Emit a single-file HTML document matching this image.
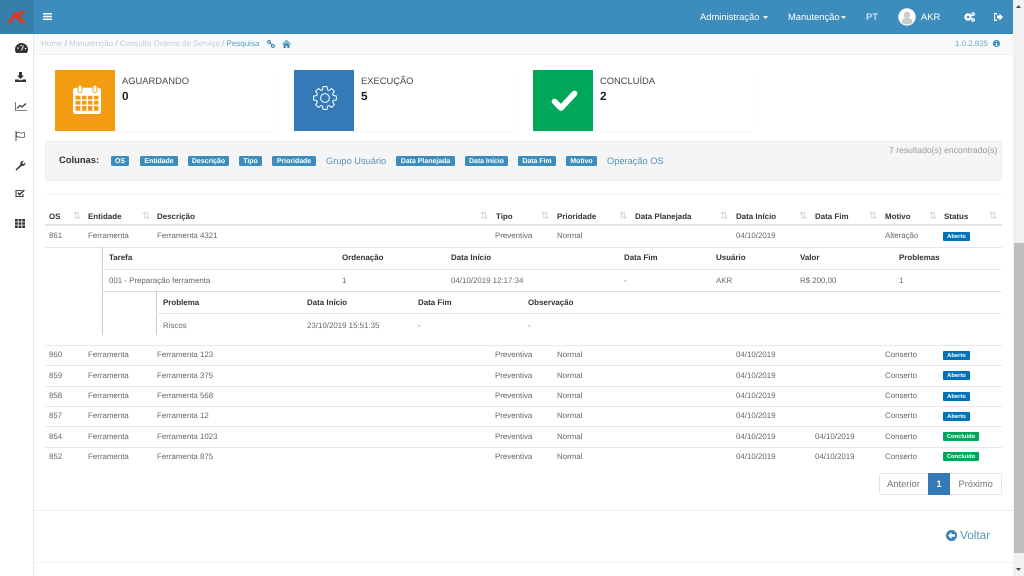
<!DOCTYPE html>
<html lang="pt"><head><meta charset="utf-8"><title>Pesquisa</title>
<style>
html,body{margin:0;padding:0;width:1024px;height:576px;overflow:hidden;background:#fff;font-family:"Liberation Sans",sans-serif;color:#555;text-rendering:geometricPrecision}
body{filter:blur(.3px)}
.a{position:absolute;white-space:nowrap}
div{box-sizing:border-box}
.t{position:absolute;white-space:nowrap;font-size:7.9px;color:#666;line-height:10px;margin-top:1px}
.h{position:absolute;white-space:nowrap;font-size:7.95px;font-weight:bold;color:#333;line-height:10px;margin-top:1px}
.l{position:absolute;height:1px;background:#e8e8e8}
.b{position:absolute;white-space:nowrap;background:#3c8dbc;color:#fff;font-size:6.95px;font-weight:bold;height:10px;line-height:12px;text-align:center;border-radius:1.5px;top:156px}
.s{position:absolute;white-space:nowrap;color:#fff;font-size:5.8px;font-weight:bold;height:9px;line-height:11px;text-align:center;border-radius:1px;left:943px;width:27px;background:#0073b7}
.c{background:#00a65a;width:36px}
.so{position:absolute;top:211px;font-size:10px;color:#d2d2d2;line-height:11px}
.n{position:absolute;top:11px;color:#fff;font-size:9.4px;line-height:12px;white-space:nowrap}
.box{position:absolute;top:70px;width:220px;height:61px;background:#fff;box-shadow:0 1px 2px rgba(0,0,0,.03)}
.ic{position:absolute;left:0;top:0;width:60px;height:61px}
.bt{position:absolute;left:67px;top:5px;font-size:9.35px;color:#444;line-height:12px}
.bv{position:absolute;left:67px;top:19px;font-size:11.8px;font-weight:bold;color:#222;line-height:14px}
svg{position:absolute;display:block}
.side svg{left:15px}
</style></head><body>
<!-- header -->
<div class="a" style="left:0;top:0;width:1013px;height:34px;background:#3c8dbc;border-bottom:1px solid #3a87b5"></div>
<div class="a" style="left:0;top:0;width:34px;height:33px;background:#367fa9"></div>
<svg style="left:7px;top:11px" width="20" height="12" viewBox="0 0 20 12"><path d="M0 12 7 2h4L4 12z M8 6 14 0h5l-6 5 6 7h-5z M7 2 11 0 10 3z" fill="#dd3b1f"/></svg>
<svg style="left:43px;top:13px" width="9" height="7" viewBox="0 0 9 7"><path d="M0 0h9v1.500H0zM0 2.800h9v1.500H0zM0 5.500h9V7H0z" fill="#fff"/></svg>
<div class="n" style="left:700px">Administração</div>
<svg style="left:763px;top:16px" width="5" height="3"><path d="M0 0h5L2.500 3z" fill="#fff"/></svg>
<div class="n" style="left:788px">Manutenção</div>
<svg style="left:841px;top:16px" width="5" height="3"><path d="M0 0h5L2.500 3z" fill="#fff"/></svg>
<div class="n" style="left:866px">PT</div>
<svg style="left:898px;top:8px" width="18" height="18" viewBox="0 0 18 18"><circle cx="9" cy="9" r="8.700" fill="#fff"/><circle cx="9" cy="7" r="3.300" fill="#ccc"/><path d="M3.500 14.500c0-3.500 2.500-4.500 5.500-4.500s5.500 1 5.500 4.500c-1.500 1.300-3.500 2-5.500 2s-4-.7-5.500-2z" fill="#ccc"/></svg>
<div class="n" style="left:921px">AKR</div>
<svg style="left:964px;top:12px" width="11" height="10" viewBox="0 0 11 10"><circle cx="4" cy="5" r="2.500" fill="none" stroke="#fff" stroke-width="2.400"/><circle cx="9" cy="2.200" r="1.300" fill="none" stroke="#fff" stroke-width="1.300"/><circle cx="9" cy="7.800" r="1.300" fill="none" stroke="#fff" stroke-width="1.300"/></svg>
<svg style="left:994px;top:13px" width="9" height="8" viewBox="0 0 9 8"><path d="M3 0H.8Q0 0 0 .8v6.400Q0 8 .8 8H3V6.800H1.200V1.200H3z M3 2.500h2.500V.5L9 4 5.500 7.500v-2H3z" fill="#fff"/></svg>
<!-- sidebar -->
<div class="a" style="left:0;top:34px;width:34px;height:542px;background:#fff;border-right:1px solid #e4e9ee"></div>
<div class="side">
<svg style="top:43px" width="13" height="10" viewBox="0 0 13 10"><path d="M6.500 0A6.500 6.500 0 0 0 0 6.500C0 8 .5 9 1.300 10h10.400C12.500 9 13 8 13 6.500A6.500 6.500 0 0 0 6.500 0z" fill="#333"/><path d="M6.500 7.500 8.500 2.500" stroke="#fff" stroke-width="1"/><circle cx="3" cy="5" r=".8" fill="#fff"/><circle cx="6" cy="2.500" r=".8" fill="#fff"/><circle cx="10.500" cy="5.500" r=".8" fill="#fff"/></svg>
<svg style="top:72px" width="11" height="10" viewBox="0 0 11 10"><path d="M4 0h3v3.500h2L5.500 7 2 3.500h2zM0 7.500h3.500l2 1 2-1H11V10H0z" fill="#333"/></svg>
<svg style="top:102px" width="12" height="9" viewBox="0 0 12 9"><path d="M.5 0v8.500H12" fill="none" stroke="#555" stroke-width=".8"/><path d="M2 6.500 5 3.500 7 5 11 1.500" fill="none" stroke="#333" stroke-width="1.200"/></svg>
<svg style="top:131px" width="10" height="10" viewBox="0 0 10 10"><path d="M1 0v10" stroke="#555" stroke-width="1"/><path d="M1.500 1.500c2-1 3 .5 4.500.5s2.500-.5 3.500-.5v4.500c-1 0-2 .5-3.500.5s-2.500-1.500-4.500-.5z" fill="none" stroke="#555" stroke-width=".8"/></svg>
<svg style="top:160px" width="11" height="11" viewBox="0 0 11 11"><path d="M1.500 10.500 .5 9.500 5.500 4.500C5 2.500 6.500.5 9 .8L7.300 2.500l.3 1.200 1.200.3L10.500 2.300C10.700 5 8.700 6.300 6.800 5.800z" fill="#333"/></svg>
<svg style="top:189px" width="10" height="9" viewBox="0 0 10 9"><path d="M8 5v2.500H1V1.500h6" fill="none" stroke="#444" stroke-width="1.100"/><path d="M2.800 3.800 4.600 5.600 9.300 1" fill="none" stroke="#333" stroke-width="1.500"/></svg>
<svg style="top:219px" width="10" height="9" viewBox="0 0 10 9"><path d="M0 0h2.800v2.500H0zM3.600 0h2.800v2.500H3.600zM7.200 0H10v2.500H7.200zM0 3.200h2.800v2.500H0zM3.600 3.200h2.800v2.500H3.600zM7.200 3.200H10v2.500H7.200zM0 6.500h2.800V9H0zM3.600 6.500h2.800V9H3.600zM7.200 6.500H10V9H7.200z" fill="#333"/></svg>
</div>
<!-- breadcrumb -->
<div class="a" style="left:34px;top:34px;width:979px;height:20px;background:#f8fafc"></div>
<div class="a" style="left:34px;top:54px;width:979px;height:1px;background:#f0f0f0"></div>
<div class="a" style="left:41px;top:38px;font-size:8px;line-height:11px;color:#c8cdd0">Home <span style="color:#8fb8d0">/</span> Manutenção <span style="color:#8fb8d0">/</span> Consulta Ordens de Serviço <span style="color:#8fb8d0">/</span> <span style="color:#5a9dc6">Pesquisa</span></div>
<svg style="left:267px;top:40px" width="8" height="8" viewBox="0 0 8 8"><circle cx="2" cy="2" r="1.400" fill="none" stroke="#3c8dbc" stroke-width="1.100"/><circle cx="6" cy="6" r="1.400" fill="none" stroke="#3c8dbc" stroke-width="1.100"/><path d="M2.500 2.500 5.500 5.500" stroke="#3c8dbc" stroke-width="1.100"/></svg>
<svg style="left:282px;top:40px" width="9" height="8" viewBox="0 0 9 8"><path d="M4.500 0 9 4 8.300 4.600 4.500 1.400.7 4.600 0 4zM1.500 4.800 4.500 2.300 7.500 4.800V8H5.300V5.800H3.700V8H1.500z" fill="#3c8dbc"/></svg>
<div class="a" style="left:955px;top:38px;font-size:7.9px;line-height:11px;color:#6fa8c9">1.0.2.835</div>
<svg style="left:993px;top:40px" width="7" height="7" viewBox="0 0 7 7"><circle cx="3.500" cy="3.500" r="3.500" fill="#3c8dbc"/><path d="M3 1h1v1H3zM2.700 3h1.300v2.300h.5V6H2.500v-.7H3V3.700h-.3z" fill="#fff"/></svg>
<!-- boxes -->
<div class="box" style="left:55px"><div class="ic" style="background:#f39c12"></div><div class="bt">AGUARDANDO</div><div class="bv">0</div>
<svg style="left:18px;top:15px" width="28" height="29" viewBox="0 0 28 31" preserveAspectRatio="none"><rect x="0" y="3" width="28" height="28" rx="2.500" fill="#fff"/><rect x="5" y="0" width="4" height="8" rx="2" fill="#fff" stroke="#f39c12" stroke-width="1"/><rect x="20" y="0" width="4" height="8" rx="2" fill="#fff" stroke="#f39c12" stroke-width="1"/><path d="M2.500 11.500h5v4h-5zM9 11.500h4.500v4H9zM15 11.500h4.500v4H15zM21 11.500h4.500v4H21zM2.500 17h5v4h-5zM9 17h4.500v4H9zM15 17h4.500v4H15zM21 17h4.500v4H21zM2.500 22.500h5v5h-5zM9 22.500h4.500v5H9zM15 22.500h4.500v5H15zM21 22.500h4.500v5H21z" fill="#f39c12"/></svg></div>
<div class="box" style="left:294px"><div class="ic" style="background:#337ab7"></div><div class="bt">EXECUÇÃO</div><div class="bv">5</div>
<svg style="left:19px;top:16px" width="24" height="24" viewBox="-12 -12 24 24"><path d="M8.220 2.510 11.330 2 L11.330 -2 8.220 -2.510 7.590 -4.040 9.420 -6.600 6.600 -9.420 4.040 -7.590 2.510 -8.220 2 -11.330 -2 -11.330 -2.510 -8.220 -4.040 -7.590 -6.600 -9.420 -9.420 -6.600 -7.590 -4.040 -8.220 -2.510 -11.330 -2 -11.330 2 -8.220 2.510 -7.590 4.040 -9.420 6.600 -6.600 9.420 -4.040 7.590 -2.510 8.220 -2 11.330 2 11.330 2.510 8.220 4.040 7.590 6.600 9.420 9.420 6.600 7.590 4.040z" fill="none" stroke="#fff" stroke-width="1" stroke-linejoin="round"/><circle r="4.400" fill="none" stroke="#fff" stroke-width="1"/></svg></div>
<div class="box" style="left:533px"><div class="ic" style="background:#00a65a"></div><div class="bt">CONCLUÍDA</div><div class="bv">2</div>
<svg style="left:18px;top:20px" width="27" height="21" viewBox="0 0 27 21"><path d="M3.500 11.500 10 18 23.500 3.500" fill="none" stroke="#fff" stroke-width="5.800" stroke-linejoin="round" stroke-linecap="round"/></svg></div>
<!-- columns well -->
<div class="a" style="left:45px;top:141px;width:957px;height:40px;background:#f5f5f5;border:1px solid #ececec;border-radius:3px"></div>
<div class="a" style="left:59px;top:154px;font-size:9.4px;font-weight:bold;color:#333;line-height:12px">Colunas:</div>
<div class="b" style="left:111px;width:18px">OS</div>
<div class="b" style="left:140px;width:38px">Entidade</div>
<div class="b" style="left:188px;width:41px">Descrição</div>
<div class="b" style="left:239px;width:23px">Tipo</div>
<div class="b" style="left:272px;width:44px">Prioridade</div>
<div class="a" style="left:326px;top:155px;font-size:9.25px;color:#5a93b8;line-height:12px">Grupo Usuário</div>
<div class="b" style="left:396px;width:59px">Data Planejada</div>
<div class="b" style="left:465px;width:43px">Data Início</div>
<div class="b" style="left:518px;width:38px">Data Fim</div>
<div class="b" style="left:566px;width:31px">Motivo</div>
<div class="a" style="left:607px;top:155px;font-size:9.25px;color:#5a93b8;line-height:12px">Operação OS</div>
<div class="a" style="left:889px;top:144px;font-size:8.65px;color:#999;line-height:12px">7 resultado(s) encontrado(s)</div>
<div class="l" style="left:45px;top:194px;width:957px;background:#f2f2f2"></div>
<!-- table head -->
<div class="h" style="left:49px;top:211px">OS</div><div class="so" style="left:73px">⇅</div>
<div class="h" style="left:88px;top:211px">Entidade</div><div class="so" style="left:142px">⇅</div>
<div class="h" style="left:157px;top:211px">Descrição</div><div class="so" style="left:480px">⇅</div>
<div class="h" style="left:496px;top:211px">Tipo</div><div class="so" style="left:541px">⇅</div>
<div class="h" style="left:557px;top:211px">Prioridade</div><div class="so" style="left:619px">⇅</div>
<div class="h" style="left:635px;top:211px">Data Planejada</div><div class="so" style="left:720px">⇅</div>
<div class="h" style="left:736px;top:211px">Data Início</div><div class="so" style="left:799px">⇅</div>
<div class="h" style="left:815px;top:211px">Data Fim</div><div class="so" style="left:869px">⇅</div>
<div class="h" style="left:885px;top:211px">Motivo</div><div class="so" style="left:929px">⇅</div>
<div class="h" style="left:944px;top:211px">Status</div><div class="so" style="left:989px">⇅</div>
<div class="l" style="left:45px;top:224px;width:957px;height:2px;background:#e2e2e2"></div>
<!-- row 861 -->
<div class="t" style="left:49px;top:230px">861</div><div class="t" style="left:88px;top:230px">Ferramenta</div><div class="t" style="left:157px;top:230px">Ferramenta 4321</div><div class="t" style="left:495px;top:230px">Preventiva</div><div class="t" style="left:557px;top:230px">Normal</div><div class="t" style="left:736px;top:230px">04/10/2019</div><div class="t" style="left:885px;top:230px">Alteração</div><div class="s" style="top:232px">Aberto</div>
<div class="l" style="left:45px;top:247px;width:957px"></div>
<!-- nested -->
<div class="a" style="left:102px;top:247px;width:1px;height:88px;background:#ccc"></div>
<div class="h" style="left:109px;top:252px">Tarefa</div><div class="h" style="left:342px;top:252px">Ordenação</div><div class="h" style="left:451px;top:252px">Data Início</div><div class="h" style="left:624px;top:252px">Data Fim</div><div class="h" style="left:716px;top:252px">Usuário</div><div class="h" style="left:800px;top:252px">Valor</div><div class="h" style="left:899px;top:252px">Problemas</div>
<div class="l" style="left:102px;top:269px;width:899px"></div>
<div class="t" style="left:109px;top:275px">001 - Preparação ferramenta</div><div class="t" style="left:342px;top:275px">1</div><div class="t" style="left:451px;top:275px">04/10/2019 12:17:34</div><div class="t" style="left:624px;top:275px">-</div><div class="t" style="left:716px;top:275px">AKR</div><div class="t" style="left:800px;top:275px">R$ 200,00</div><div class="t" style="left:899px;top:275px">1</div>
<div class="l" style="left:102px;top:291px;width:899px;background:#ddd"></div>
<div class="a" style="left:156px;top:291px;width:1px;height:44px;background:#ccc"></div>
<div class="h" style="left:163px;top:297px">Problema</div><div class="h" style="left:307px;top:297px">Data Início</div><div class="h" style="left:418px;top:297px">Data Fim</div><div class="h" style="left:528px;top:297px">Observação</div>
<div class="l" style="left:156px;top:313px;width:845px"></div>
<div class="t" style="left:163px;top:320px">Riscos</div><div class="t" style="left:307px;top:320px">23/10/2019 15:51:35</div><div class="t" style="left:418px;top:320px">-</div><div class="t" style="left:528px;top:320px">-</div>
<div class="l" style="left:45px;top:345px;width:957px"></div>
<!-- rows -->
<div class="t" style="left:49px;top:349px">860</div><div class="t" style="left:88px;top:349px">Ferramenta</div><div class="t" style="left:157px;top:349px">Ferramenta 123</div><div class="t" style="left:495px;top:349px">Preventiva</div><div class="t" style="left:557px;top:349px">Normal</div><div class="t" style="left:736px;top:349px">04/10/2019</div><div class="t" style="left:885px;top:349px">Conserto</div><div class="s" style="top:351px">Aberto</div>
<div class="l" style="left:45px;top:365px;width:957px"></div>
<div class="t" style="left:49px;top:370px">859</div><div class="t" style="left:88px;top:370px">Ferramenta</div><div class="t" style="left:157px;top:370px">Ferramenta 375</div><div class="t" style="left:495px;top:370px">Preventiva</div><div class="t" style="left:557px;top:370px">Normal</div><div class="t" style="left:736px;top:370px">04/10/2019</div><div class="t" style="left:885px;top:370px">Conserto</div><div class="s" style="top:371px">Aberto</div>
<div class="l" style="left:45px;top:386px;width:957px"></div>
<div class="t" style="left:49px;top:390px">858</div><div class="t" style="left:88px;top:390px">Ferramenta</div><div class="t" style="left:157px;top:390px">Ferramenta 568</div><div class="t" style="left:495px;top:390px">Preventiva</div><div class="t" style="left:557px;top:390px">Normal</div><div class="t" style="left:736px;top:390px">04/10/2019</div><div class="t" style="left:885px;top:390px">Conserto</div><div class="s" style="top:392px">Aberto</div>
<div class="l" style="left:45px;top:406px;width:957px"></div>
<div class="t" style="left:49px;top:410px">857</div><div class="t" style="left:88px;top:410px">Ferramenta</div><div class="t" style="left:157px;top:410px">Ferramenta 12</div><div class="t" style="left:495px;top:410px">Preventiva</div><div class="t" style="left:557px;top:410px">Normal</div><div class="t" style="left:736px;top:410px">04/10/2019</div><div class="t" style="left:885px;top:410px">Conserto</div><div class="s" style="top:412px">Aberto</div>
<div class="l" style="left:45px;top:426px;width:957px"></div>
<div class="t" style="left:49px;top:431px">854</div><div class="t" style="left:88px;top:431px">Ferramenta</div><div class="t" style="left:157px;top:431px">Ferramenta 1023</div><div class="t" style="left:495px;top:431px">Preventiva</div><div class="t" style="left:557px;top:431px">Normal</div><div class="t" style="left:736px;top:431px">04/10/2019</div><div class="t" style="left:815px;top:431px">04/10/2019</div><div class="t" style="left:885px;top:431px">Conserto</div><div class="s c" style="top:432px">Concluído</div>
<div class="l" style="left:45px;top:447px;width:957px"></div>
<div class="t" style="left:49px;top:451px">852</div><div class="t" style="left:88px;top:451px">Ferramenta</div><div class="t" style="left:157px;top:451px">Ferramenta 875</div><div class="t" style="left:495px;top:451px">Preventiva</div><div class="t" style="left:557px;top:451px">Normal</div><div class="t" style="left:736px;top:451px">04/10/2019</div><div class="t" style="left:815px;top:451px">04/10/2019</div><div class="t" style="left:885px;top:451px">Conserto</div><div class="s c" style="top:452px">Concluído</div>
<!-- pagination -->
<div class="a" style="left:879px;top:473px;width:123px;height:22px;border:1px solid #e2e2e2;border-radius:3px;background:#fff"></div>
<div class="a" style="left:887px;top:478px;font-size:9.4px;color:#777;line-height:12px">Anterior</div>
<div class="a" style="left:928px;top:473px;width:22px;height:22px;background:#337ab7;color:#fff;font-size:9.4px;font-weight:bold;text-align:center;line-height:22px">1</div>
<div class="a" style="left:958.500px;top:478px;font-size:9.4px;color:#777;line-height:12px">Próximo</div>
<div class="l" style="left:34px;top:510px;width:979px;background:#eee"></div>
<!-- voltar -->
<svg style="left:946px;top:530px" width="11" height="11" viewBox="0 0 11 11"><circle cx="5.500" cy="5.500" r="5.500" fill="#3c7fb1"/><path d="M5.500 2 2 5.500 5.500 9V6.800H9V4.200H5.500z" fill="#fff"/></svg>
<div class="a" style="left:960px;top:528px;font-size:11.8px;color:#5a93b8;line-height:15px">Voltar</div>
<div class="l" style="left:34px;top:562px;width:979px;background:#f4f4f4"></div>
<!-- scrollbar -->
<div class="a" style="left:1013px;top:0;width:11px;height:576px;background:#f1f1f1"></div>
<div class="a" style="left:1014px;top:243px;width:10px;height:310px;background:#bdbdbd"></div>
<svg style="left:1016px;top:5px" width="5" height="3"><path d="M2.500 0 5 3H0z" fill="#505050"/></svg>
<svg style="left:1016px;top:568px" width="5" height="3"><path d="M0 0h5L2.500 3z" fill="#505050"/></svg>
</body></html>
